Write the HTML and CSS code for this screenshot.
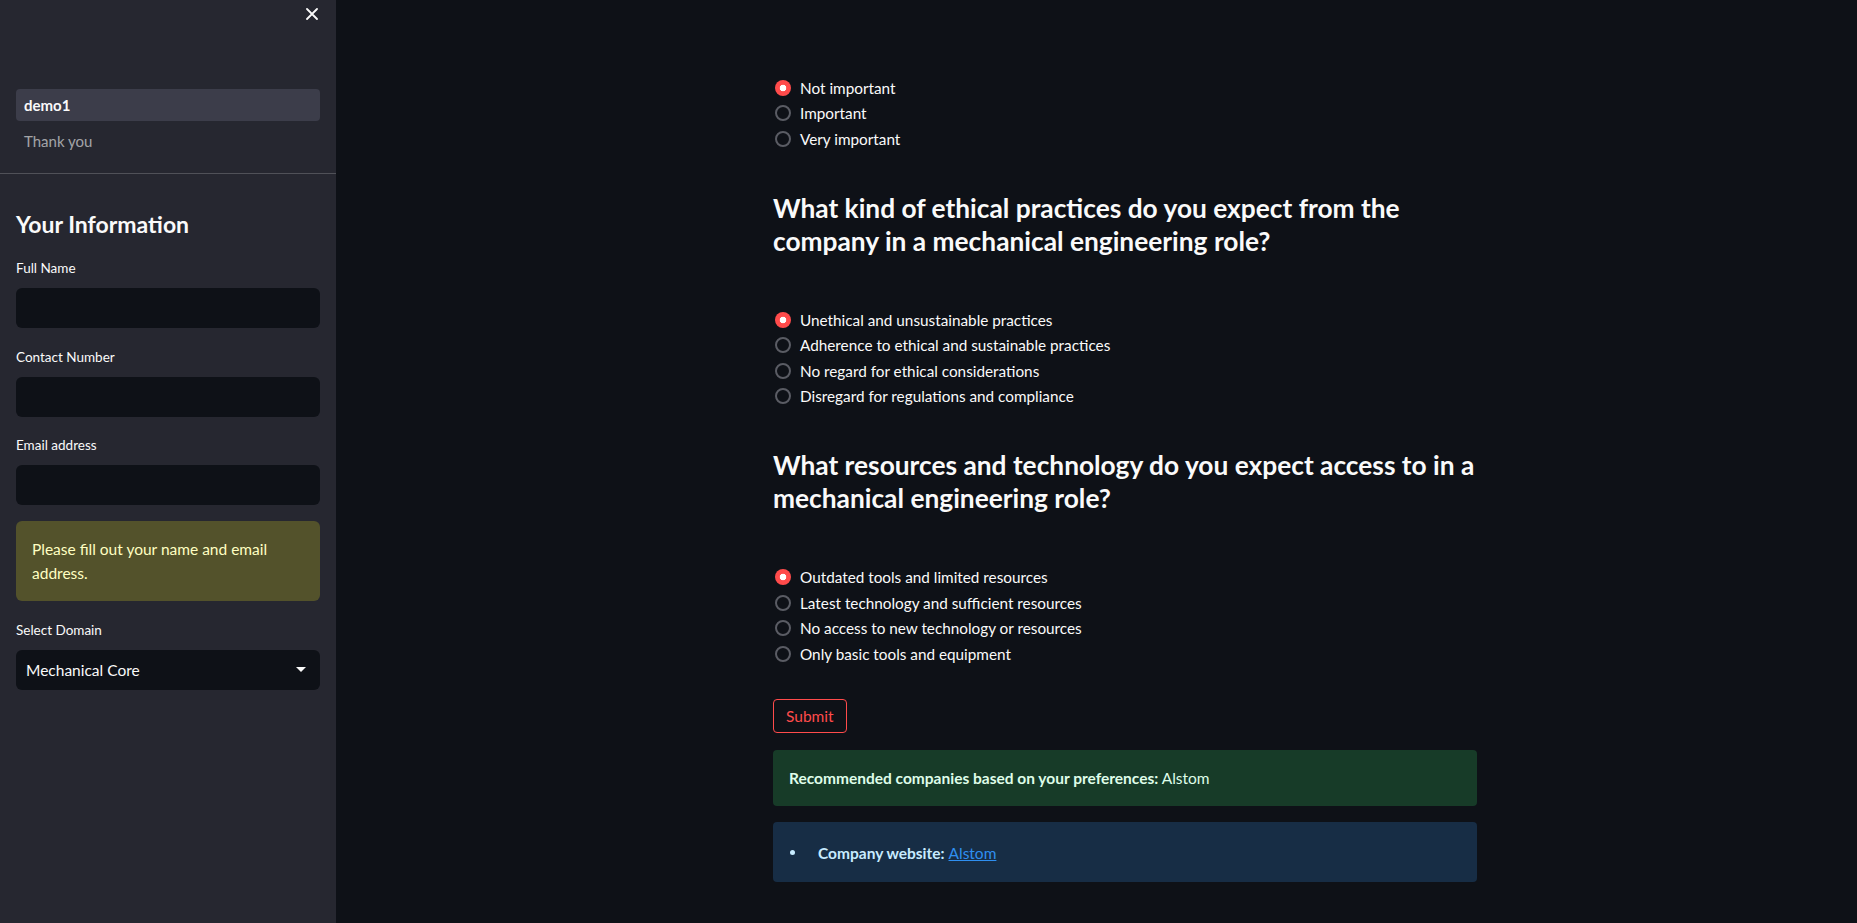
FILE: index.html
```html
<!DOCTYPE html>
<html lang="en">
<head>
<meta charset="utf-8">
<title>Survey</title>
<link rel="stylesheet" href="styles.css">
</head>
<body>
<div class="app">
  <aside class="sidebar">
    <div class="side-top">
      <button class="close-btn" aria-label="Close sidebar">
        <svg width="12" height="12" viewBox="0 0 12 12"><path d="M1 1 L11 11 M11 1 L1 11" stroke="#fafafa" stroke-width="1.8" stroke-linecap="round"/></svg>
      </button>
    </div>
    <nav class="side-nav">
      <a class="nav-item active">demo1</a>
      <a class="nav-item">Thank you</a>
    </nav>
    <div class="side-body">
      <h2 class="side-title">Your Information</h2>
      <label class="field-label">Full Name</label>
      <div class="text-input"></div>
      <label class="field-label">Contact Number</label>
      <div class="text-input"></div>
      <label class="field-label">Email address</label>
      <div class="text-input"></div>
      <div class="warning">Please fill out your name and email address.</div>
      <label class="field-label">Select Domain</label>
      <div class="select">
        <span>Mechanical Core</span>
        <svg width="10" height="6" viewBox="0 0 10 6"><path d="M0 0 L10 0 L5 5 Z" fill="#fafafa"/></svg>
      </div>
    </div>
  </aside>
  <main class="main">
    <div class="content">
      <div class="radio-group first">
        <div class="radio-row"><span class="radio on"></span><span>Not important</span></div>
        <div class="radio-row"><span class="radio"></span><span>Important</span></div>
        <div class="radio-row"><span class="radio"></span><span>Very important</span></div>
      </div>
      <h3 class="question">What kind of ethical practices do you expect from the<br>company in a mechanical engineering role?</h3>
      <div class="radio-group">
        <div class="radio-row"><span class="radio on"></span><span>Unethical and unsustainable practices</span></div>
        <div class="radio-row"><span class="radio"></span><span>Adherence to ethical and sustainable practices</span></div>
        <div class="radio-row"><span class="radio"></span><span>No regard for ethical considerations</span></div>
        <div class="radio-row"><span class="radio"></span><span>Disregard for regulations and compliance</span></div>
      </div>
      <h3 class="question">What resources and technology do you expect access to in a<br>mechanical engineering role?</h3>
      <div class="radio-group">
        <div class="radio-row"><span class="radio on"></span><span>Outdated tools and limited resources</span></div>
        <div class="radio-row"><span class="radio"></span><span>Latest technology and sufficient resources</span></div>
        <div class="radio-row"><span class="radio"></span><span>No access to new technology or resources</span></div>
        <div class="radio-row"><span class="radio"></span><span>Only basic tools and equipment</span></div>
      </div>
      <button class="submit">Submit</button>
      <div class="alert success"><strong>Recommended companies based on your preferences:</strong> Alstom</div>
      <div class="alert info">
        <ul><li><strong>Company website:</strong> <a href="#" class="link">Alstom</a></li></ul>
      </div>
    </div>
  </main>
</div>
</body>
</html>
```
FILE: styles.css
```css
* { box-sizing: border-box; }
html, body { margin: 0; padding: 0; }
body {
  background: #0e1117;
  color: #fafafa;
  font-family: Lato, "Noto Sans", sans-serif;
  font-size: 16px;
  overflow: hidden;
}
.app { display: flex; width: 1857px; height: 923px; }

.sidebar {
  width: 336px;
  flex: none;
  background: #262730;
  height: 100%;
}
.side-top {
  height: 28px;
  display: flex;
  justify-content: flex-end;
  align-items: center;
  padding-right: 18px;
}
.close-btn {
  background: none; border: 0; padding: 0; width: 12px; height: 12px;
  display: flex; align-items: center; justify-content: center;
}
.side-nav {
  margin-top: 61px;
  padding: 0 16px 16px;
  display: flex;
  flex-direction: column;
  gap: 4px;
  border-bottom: 1px solid rgba(250,250,250,0.2);
}
.nav-item {
  height: 32px;
  display: flex;
  align-items: center;
  padding-left: 8px;
  border-radius: 4px;
  font-size: 15px;
  color: rgba(250,250,250,0.6);
}
.nav-item.active {
  background: #3c3d4a;
  color: #fafafa;
  font-weight: 700;
}
.side-body { padding: 0 16px; display: flex; flex-direction: column; }
.side-title {
  margin: 34px 0 0;
  font-size: 23px;
  line-height: 32px;
  font-weight: 700;
}
.field-label {
  display: block;
  font-size: 13.5px;
  line-height: 20px;
  margin: 18.5px 0 10px;
}
.side-title + .field-label { margin-top: 18px; }
.text-input {
  height: 40px;
  background: #0e1117;
  border-radius: 6px;
}
.warning {
  margin-top: 16px;
  height: 80px;
  padding: 16px 16px;
  background: #53522b;
  color: #ffffc2;
  border-radius: 6px;
  font-size: 15.5px;
  line-height: 24px;
}
.select {
  height: 40px;
  background: #0e1117;
  border-radius: 6px;
  display: flex;
  align-items: center;
  justify-content: space-between;
  padding: 0 14px 0 10px;
  font-size: 15.5px;
}

.main { flex: 1; padding-left: 437px; }
.content { width: 704px; padding-top: 75px; }
.radio-group { margin-top: 49px; }
.radio-group.first { margin-top: 0; }
.radio-row {
  height: 25.6px;
  display: flex;
  align-items: center;
  gap: 9px;
  padding-left: 2px;
  font-size: 15.3px;
}
.radio {
  width: 16px; height: 16px;
  border-radius: 50%;
  border: 2px solid #5a5c64;
  flex: none;
}
.radio.on {
  border: 0;
  background: radial-gradient(circle, #ffffff 0 3px, #ff4b4b 3.6px);
}
.question {
  margin: 40px 0 0;
  font-size: 26.3px;
  line-height: 33px;
  font-weight: 700;
  white-space: nowrap;
}
.submit {
  margin-top: 32px;
  height: 34px;
  padding: 0 12px;
  background: transparent;
  border: 1px solid #ff4b4b;
  color: #ff4b4b;
  border-radius: 4px;
  font-family: inherit;
  font-size: 15.5px;
  display: block;
}
.alert {
  margin-top: 17px;
  border-radius: 4px;
  padding: 16px;
  font-size: 15.5px;
  line-height: 24px;
}
.alert.success { background: #173b28; color: #dffde9; height: 56px; }
.alert.info { background: #172d45; color: #c7ebff; margin-top: 16px; height: 60px; padding: 19px 16px 17px; }
.alert strong { font-weight: 700; }
.alert ul { margin: 0; padding: 0; list-style: none; }
.alert li { display: flex; align-items: center; gap: 4px; }
.alert li::before {
  content: "";
  width: 5px; height: 5px;
  border-radius: 50%;
  background: #c7ebff;
  margin: 0 19px 0 1px;
  flex: none;
}
.link { color: #2f8ff0; text-decoration: underline; }
```
